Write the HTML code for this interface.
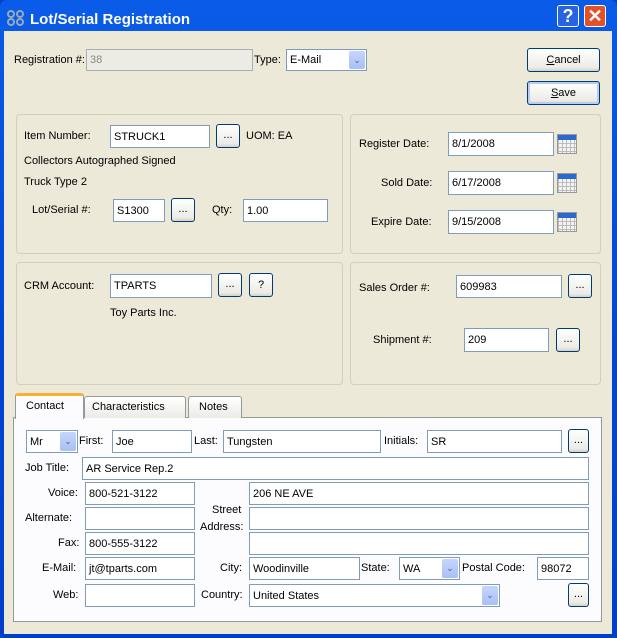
<!DOCTYPE html><html><head><style>
*{box-sizing:border-box}
body{margin:0;width:617px;height:638px;overflow:hidden;font-family:"Liberation Sans",sans-serif;font-size:11px;color:#000;background:#0842c8}
#win{position:absolute;left:0;top:0;width:617px;height:638px;background:linear-gradient(#0a5ce8,#0046d4 50%,#0040c8);border-radius:7px 7px 0 0}
#client{position:absolute;left:4px;top:31px;width:608px;height:603px;background:#ece9d8}
.t{position:absolute;white-space:nowrap;line-height:14px}
.f{position:absolute;background:#fff;border:1px solid #7f9db9;padding:0 3px;display:flex;align-items:center;white-space:nowrap;overflow:hidden}
.b{position:absolute;border:1px solid #003c74;border-radius:3px;background:linear-gradient(#fff,#ecebe6 85%,#d6d0c5);text-align:center;font-size:11px}
.g{position:absolute;border:1px solid #d0d0bf;border-radius:4px}
.dd{position:absolute;right:1px;top:1px;bottom:1px;width:16px;background:linear-gradient(#c6d5fc,#a9c0f5);border-radius:2px;color:#4d6185;font-size:9px;text-align:center;line-height:18px}
.cal{position:absolute;width:20px;height:20px;background:repeating-linear-gradient(90deg,#bbb 0 1px,transparent 1px 4px),repeating-linear-gradient(#bbb 0 1px,#f4f4f4 1px 4px);border:1px solid #999}
.cal:before{content:"";position:absolute;left:0;top:0;right:0;height:5px;background:#2a6ad0}
</style></head><body>
<div id="win">
<svg style="position:absolute;left:7px;top:10px" width="18" height="16"><circle cx="4" cy="4" r="3" fill="none" stroke="#9ab" stroke-width="2"/><circle cx="13" cy="4" r="3" fill="none" stroke="#9ab" stroke-width="2"/><circle cx="4" cy="12" r="3" fill="none" stroke="#9ab" stroke-width="2"/><circle cx="13" cy="12" r="3" fill="none" stroke="#9ab" stroke-width="2"/></svg>
<div class="t" style="left:30px;top:11px;color:#fff;font-weight:bold;font-size:15px;line-height:18px">Lot/Serial Registration</div>
<div style="position:absolute;left:557px;top:5px;width:22px;height:22px;border:1px solid #fff;border-radius:3px;background:#2a63e0;color:#fff;font-weight:bold;font-size:18px;text-align:center;line-height:20px">?</div>
<div style="position:absolute;left:584px;top:5px;width:22px;height:22px;border:1px solid #fff;border-radius:3px;background:#e0522a;color:#fff;font-weight:bold;font-size:18px;text-align:center;line-height:20px">✕</div>
</div>
<div id="client"></div>
<div class="t" style="left:14px;top:53px">Registration #:</div>
<div class="f" style="left:86px;top:49px;width:167px;height:22px;background:#ecebe4;color:#888;border-color:#a6aeb8">38</div>
<div class="t" style="left:254px;top:53px">Type:</div>
<div class="f" style="left:286px;top:49px;width:81px;height:22px">E-Mail<span class="dd">⌄</span></div>
<div class="b" style="left:527px;top:48px;width:73px;height:24px;line-height:22px"><u>C</u>ancel</div>
<div class="b" style="left:527px;top:81px;width:73px;height:24px;line-height:22px;box-shadow:inset 0 0 0 2px #b8cdf5"><u>S</u>ave</div>

<div class="g" style="left:16px;top:114px;width:327px;height:140px"></div>
<div class="g" style="left:350px;top:114px;width:251px;height:140px"></div>
<div class="g" style="left:16px;top:262px;width:327px;height:123px"></div>
<div class="g" style="left:350px;top:262px;width:251px;height:123px"></div>

<div class="t" style="left:24px;top:129px">Item Number:</div>
<div class="f" style="left:110px;top:125px;width:100px;height:23px">STRUCK1</div>
<div class="b" style="left:216px;top:124px;width:24px;height:24px;line-height:20px">...</div>
<div class="t" style="left:246px;top:129px">UOM: EA</div>
<div class="t" style="left:24px;top:154px">Collectors Autographed Signed</div>
<div class="t" style="left:24px;top:175px">Truck Type 2</div>
<div class="t" style="left:32px;top:203px">Lot/Serial #:</div>
<div class="f" style="left:113px;top:199px;width:52px;height:23px">S1300</div>
<div class="b" style="left:171px;top:198px;width:24px;height:24px;line-height:20px">...</div>
<div class="t" style="left:212px;top:203px">Qty:</div>
<div class="f" style="left:243px;top:199px;width:85px;height:23px">1.00</div>

<div class="t" style="left:359px;top:137px">Register Date:</div>
<div class="f" style="left:448px;top:132px;width:106px;height:24px">8/1/2008</div>
<div class="cal" style="left:557px;top:134px"></div>
<div class="t" style="left:381px;top:176px">Sold Date:</div>
<div class="f" style="left:448px;top:171px;width:106px;height:24px">6/17/2008</div>
<div class="cal" style="left:557px;top:173px"></div>
<div class="t" style="left:371px;top:215px">Expire Date:</div>
<div class="f" style="left:448px;top:210px;width:106px;height:24px">9/15/2008</div>
<div class="cal" style="left:557px;top:212px"></div>

<div class="t" style="left:24px;top:279px">CRM Account:</div>
<div class="f" style="left:110px;top:274px;width:102px;height:24px">TPARTS</div>
<div class="b" style="left:218px;top:273px;width:24px;height:24px;line-height:20px">...</div>
<div class="b" style="left:249px;top:273px;width:24px;height:24px;line-height:22px">?</div>
<div class="t" style="left:110px;top:306px">Toy Parts Inc.</div>
<div class="t" style="left:359px;top:281px">Sales Order #:</div>
<div class="f" style="left:456px;top:275px;width:106px;height:23px">609983</div>
<div class="b" style="left:568px;top:274px;width:24px;height:24px;line-height:20px">...</div>
<div class="t" style="left:373px;top:333px">Shipment #:</div>
<div class="f" style="left:464px;top:328px;width:85px;height:24px">209</div>
<div class="b" style="left:556px;top:328px;width:24px;height:24px;line-height:20px">...</div>

<div style="position:absolute;left:13px;top:417px;width:589px;height:205px;background:#fcfcfe;border:1px solid #919b9c"></div>
<div style="position:absolute;left:84px;top:396px;width:102px;height:22px;border:1px solid #919b9c;border-bottom:none;border-radius:3px 3px 0 0;background:linear-gradient(#fff,#ecebe6)"></div>
<div style="position:absolute;left:188px;top:396px;width:54px;height:22px;border:1px solid #919b9c;border-bottom:none;border-radius:3px 3px 0 0;background:linear-gradient(#fff,#ecebe6)"></div>
<div style="position:absolute;left:15px;top:393px;width:69px;height:26px;border:1px solid #919b9c;border-top:3px solid #f5b335;border-bottom:none;border-radius:3px 3px 0 0;background:#fcfcfe"></div>
<div class="t" style="left:26px;top:399px">Contact</div>
<div class="t" style="left:92px;top:400px">Characteristics</div>
<div class="t" style="left:199px;top:400px">Notes</div>

<div class="f" style="left:26px;top:430px;width:52px;height:23px">Mr<span class="dd">⌄</span></div>
<div class="t" style="left:79px;top:434px">First:</div>
<div class="f" style="left:112px;top:430px;width:80px;height:23px">Joe</div>
<div class="t" style="left:194px;top:434px">Last:</div>
<div class="f" style="left:223px;top:430px;width:158px;height:23px">Tungsten</div>
<div class="t" style="left:384px;top:434px">Initials:</div>
<div class="f" style="left:427px;top:430px;width:135px;height:23px">SR</div>
<div class="b" style="left:568px;top:429px;width:21px;height:24px;line-height:20px">...</div>
<div class="t" style="left:25px;top:461px">Job Title:</div>
<div class="f" style="left:82px;top:457px;width:507px;height:23px">AR Service Rep.2</div>
<div class="t" style="left:48px;top:486px">Voice:</div>
<div class="f" style="left:85px;top:482px;width:110px;height:23px">800-521-3122</div>
<div class="f" style="left:249px;top:482px;width:340px;height:23px">206 NE AVE</div>
<div class="t" style="left:25px;top:511px">Alternate:</div>
<div class="f" style="left:85px;top:507px;width:110px;height:23px"></div>
<div class="t" style="left:212px;top:503px">Street</div>
<div class="t" style="left:200px;top:520px">Address:</div>
<div class="f" style="left:249px;top:507px;width:340px;height:23px"></div>
<div class="t" style="left:58px;top:536px">Fax:</div>
<div class="f" style="left:85px;top:532px;width:110px;height:23px">800-555-3122</div>
<div class="f" style="left:249px;top:532px;width:340px;height:23px"></div>
<div class="t" style="left:42px;top:561px">E-Mail:</div>
<div class="f" style="left:85px;top:557px;width:110px;height:23px">jt@tparts.com</div>
<div class="t" style="left:220px;top:561px">City:</div>
<div class="f" style="left:249px;top:557px;width:111px;height:23px">Woodinville</div>
<div class="t" style="left:361px;top:561px">State:</div>
<div class="f" style="left:399px;top:557px;width:61px;height:23px">WA<span class="dd">⌄</span></div>
<div class="t" style="left:462px;top:561px">Postal Code:</div>
<div class="f" style="left:537px;top:557px;width:52px;height:23px">98072</div>
<div class="t" style="left:53px;top:588px">Web:</div>
<div class="f" style="left:85px;top:584px;width:110px;height:23px"></div>
<div class="t" style="left:201px;top:588px">Country:</div>
<div class="f" style="left:249px;top:584px;width:251px;height:23px">United States<span class="dd">⌄</span></div>
<div class="b" style="left:568px;top:583px;width:21px;height:24px;line-height:20px">...</div>
</body></html>
